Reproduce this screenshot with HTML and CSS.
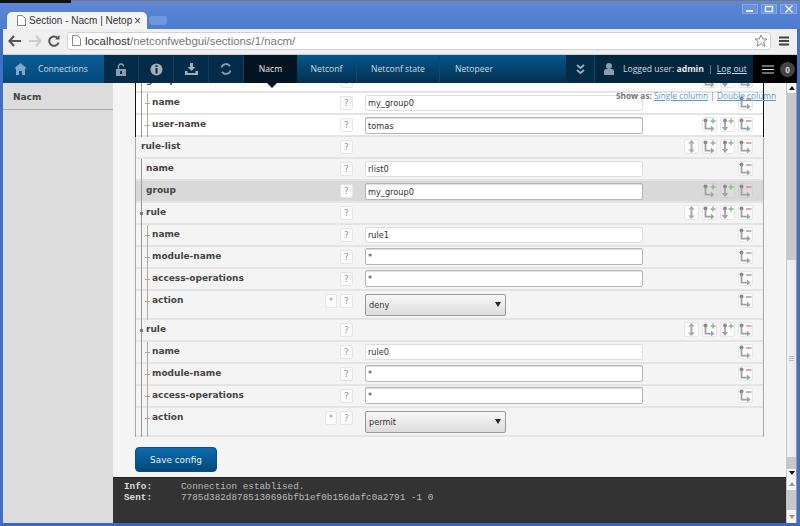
FILE: index.html
```html
<!DOCTYPE html>
<html lang="en">
<head>
<meta charset="utf-8">
<title>Section - Nacm | Netopeer</title>
<link rel="stylesheet" href="styles.css">
</head>
<body>
<svg class="defs" width="0" height="0" aria-hidden="true">
  <symbol id="i-move" viewBox="0 0 13 13"><path d="M6.500 2.500v8" stroke="#aaa" stroke-width="2" fill="none"/><path d="M6.500 0l3.200 3.500h-6.400zM6.500 13l3.200-3.500h-6.400z" fill="#aaa"/></symbol>
  <symbol id="i-child-add" viewBox="0 0 13 13"><circle cx="2.500" cy="2.500" r="2" fill="#888"/><path d="M2.500 3.500v7.200h6" stroke="#a2a2a2" stroke-width="1.800" fill="none"/><path d="M8 7.500l3.500 3.200L8 13.500z" fill="#a2a2a2"/><path d="M7.500 3h5M10 .5v5" stroke="#7fc47f" stroke-width="1.500"/></symbol>
  <symbol id="i-sib-add" viewBox="0 0 13 13"><circle cx="4" cy="2.500" r="2" fill="#888"/><path d="M4 3.500v6.500" stroke="#a2a2a2" stroke-width="1.800" fill="none"/><path d="M.8 9h6.400L4 13z" fill="#a2a2a2"/><path d="M7.500 3h5M10 .5v5" stroke="#7fc47f" stroke-width="1.500"/></symbol>
  <symbol id="i-remove" viewBox="0 0 13 13"><circle cx="2.500" cy="2.500" r="2" fill="#888"/><path d="M2.500 3.500v7.200h6" stroke="#a2a2a2" stroke-width="1.800" fill="none"/><path d="M8 7.500l3.500 3.200L8 13.500z" fill="#a2a2a2"/><path d="M7 3h5.500" stroke="#e08a8a" stroke-width="1.500"/></symbol>
</svg>

<div class="window">
  <div class="titlebar">
    <div class="tab">
      <svg class="tab-page" width="9" height="11" viewBox="0 0 9 11"><path d="M.5.500h5l3 3v7h-8z" fill="#fff" stroke="#888"/></svg>
      <span class="tab-title">Section - Nacm | Netop</span>
      <span class="tab-close">×</span>
    </div>
    <div class="tab-new"></div>
    <div class="win-controls">
      <span class="win-btn"><svg width="10" height="8" viewBox="0 0 10 8"><path d="M1 6h7" stroke="#e8eefa" stroke-width="2"/></svg></span>
      <span class="win-btn"><svg width="10" height="8" viewBox="0 0 10 8"><path d="M1.500 1.500h7v5h-7z" stroke="#e8eefa" stroke-width="1.400" fill="none"/></svg></span>
      <span class="win-btn wide"><svg width="10" height="8" viewBox="0 0 10 8"><path d="M1.500.500l7 7M8.500.500l-7 7" stroke="#e8eefa" stroke-width="1.500"/></svg></span>
    </div>
  </div>

  <div class="toolbar">
    <svg class="tool" width="14" height="12" viewBox="0 0 14 12"><path d="M6 1L1.500 6 6 11M2 6h11" stroke="#555" stroke-width="2.200" fill="none"/></svg>
    <svg class="tool" width="14" height="12" viewBox="0 0 14 12"><path d="M8 1l4.500 5L8 11M12 6H1" stroke="#ccc" stroke-width="2.200" fill="none"/></svg>
    <svg class="tool" width="12" height="12" viewBox="0 0 12 12"><path d="M10.500 7.500A4.700 4.700 0 1 1 9.300 2.800" stroke="#555" stroke-width="2" fill="none"/><path d="M7 4.500h4.500V0z" fill="#555"/></svg>
    <div class="omnibox">
      <svg width="9" height="11" viewBox="0 0 9 11"><path d="M.5.500h5l3 3v7h-8z" fill="#fff" stroke="#888"/></svg>
      <span class="url"><b>localhost</b>/netconfwebgui/sections/1/nacm/</span>
      <svg class="bookmark" width="14" height="14" viewBox="0 0 14 14"><path d="M7 1l1.800 4h4.200l-3.300 2.800 1.200 4.400L7 9.800l-3.900 2.400 1.200-4.400L1 5h4.200z" fill="#fff" stroke="#888"/></svg>
    </div>
    <svg class="menu" width="10" height="10" viewBox="0 0 10 10"><path d="M0 1.500h10M0 5h10M0 8.500h10" stroke="#444" stroke-width="2"/></svg>
  </div>

  <nav class="nav">
    <a class="nav-home">
      <svg width="13" height="12" viewBox="0 0 13 12"><path d="M6.500 0L0 5.500h2V12h3V8h3v4h3V5.500h2z" fill="#7fa8c9"/></svg>
      <span>Connections</span>
    </a>
    <div class="nav-tools">
      <span class="tool-cell"><svg width="10" height="13" viewBox="0 0 10 13"><path d="M0 6h10v7H0z" fill="#8a9eae"/><path d="M2.500 6V3.500a2.500 2.500 0 0 1 5 0" stroke="#8a9eae" stroke-width="1.400" fill="none"/><rect x="4" y="8" width="2" height="3" fill="#062a44"/></svg></span>
      <span class="tool-cell"><svg width="13" height="13" viewBox="0 0 13 13"><circle cx="6.500" cy="6.500" r="6" fill="#9fb0bd"/><path d="M5.500 5h2v5.500h-2zM5.500 2.200h2v1.800h-2z" fill="#062a44"/></svg></span>
      <span class="tool-cell"><svg width="13" height="12" viewBox="0 0 13 12"><path d="M5 0h3v4h2.500L6.500 8 2.500 4H5zM0 8h2.500v2h8V8H13v4H0z" fill="#9fb0bd"/></svg></span>
      <span class="tool-cell"><svg width="12" height="12" viewBox="0 0 12 12"><path d="M1.500 4.500A4.700 4.700 0 0 1 10 3.200M10.500 7.500A4.700 4.700 0 0 1 2 8.800" stroke="#8a9eae" stroke-width="1.800" fill="none"/></svg></span>
    </div>
    <a class="nav-tab active">Nacm</a>
    <a class="nav-tab t1">Netconf</a>
    <a class="nav-tab t2">Netconf state</a>
    <a class="nav-tab t3">Netopeer</a>
    <span class="nav-more"><svg width="9" height="11" viewBox="0 0 9 11"><path d="M1 1l3.500 3L8 1M1 6l3.500 3L8 6" stroke="#9fb0bd" stroke-width="1.800" fill="none"/></svg></span>
    <div class="nav-user">
      <svg width="10" height="12" viewBox="0 0 10 12"><circle cx="5" cy="3" r="3" fill="#8a9eae"/><path d="M0 12V8q0-2 2.500-2h5Q10 6 10 8v4z" fill="#8a9eae"/></svg>
      <span class="logged">Logged user: <b>admin</b></span>
      <span class="sep"></span>
      <a class="logout">Log out</a>
    </div>
    <div class="nav-log">
      <svg width="12" height="9" viewBox="0 0 12 9"><path d="M0 1h12M0 4.500h12M0 8h12" stroke="#ddd" stroke-width="1"/></svg>
      <span class="badge">0</span>
    </div>
    <span class="nav-arrow"></span>
  </nav>

  <div class="body">
    <aside class="side">
      <div class="side-item">Nacm</div>
    </aside>
    <div class="center">
      <div class="upper">
        <main class="main">
          <div class="show-as"><b>Show as:</b> <a>Single column</a> | <a>Double column</a></div>
          <div class="list">
            <div class="group-block">
              <div class="row d1"><span class="lab">group</span><span class="help">?</span><span class="field"></span>
                <span class="acts"><span class="ib"><svg><use href="#i-child-add"/></svg></span><span class="ib"><svg><use href="#i-sib-add"/></svg></span><span class="ib"><svg><use href="#i-remove"/></svg></span></span></div>
              <div class="row d2"><span class="lab">name</span><span class="help">?</span><input class="inp" value="my_group0">
                <span class="acts"><span class="ib"><svg><use href="#i-remove"/></svg></span></span></div>
              <div class="row d2"><span class="lab">user-name</span><span class="help">?</span><input class="inp strong" value="tomas">
                <span class="acts"><span class="ib"><svg><use href="#i-child-add"/></svg></span><span class="ib"><svg><use href="#i-sib-add"/></svg></span><span class="ib"><svg><use href="#i-remove"/></svg></span></span></div>
            </div>

            <div class="row d0"><span class="lab">rule-list</span><span class="help">?</span><span class="field"></span>
              <span class="acts"><span class="ib"><svg><use href="#i-move"/></svg></span><span class="ib"><svg><use href="#i-child-add"/></svg></span><span class="ib"><svg><use href="#i-sib-add"/></svg></span><span class="ib"><svg><use href="#i-remove"/></svg></span></span></div>
            <div class="row d1"><span class="lab">name</span><span class="help">?</span><input class="inp" value="rlist0">
              <span class="acts"><span class="ib"><svg><use href="#i-remove"/></svg></span></span></div>
            <div class="row d1 selected"><span class="lab">group</span><span class="help">?</span><input class="inp strong" value="my_group0">
              <span class="acts"><span class="ib"><svg><use href="#i-child-add"/></svg></span><span class="ib"><svg><use href="#i-sib-add"/></svg></span><span class="ib"><svg><use href="#i-remove"/></svg></span></span></div>

            <div class="row d1 node"><span class="lab">rule</span><span class="help">?</span><span class="field"></span>
              <span class="acts"><span class="ib"><svg><use href="#i-move"/></svg></span><span class="ib"><svg><use href="#i-child-add"/></svg></span><span class="ib"><svg><use href="#i-sib-add"/></svg></span><span class="ib"><svg><use href="#i-remove"/></svg></span></span></div>
            <div class="row d2"><span class="lab">name</span><span class="help">?</span><input class="inp" value="rule1">
              <span class="acts"><span class="ib"><svg><use href="#i-remove"/></svg></span></span></div>
            <div class="row d2"><span class="lab">module-name</span><span class="help">?</span><input class="inp strong tight" value="*">
              <span class="acts"><span class="ib"><svg><use href="#i-remove"/></svg></span></span></div>
            <div class="row d2"><span class="lab">access-operations</span><span class="help">?</span><input class="inp strong tight" value="*">
              <span class="acts"><span class="ib"><svg><use href="#i-remove"/></svg></span></span></div>
            <div class="row d2 tall"><span class="lab">action</span><span class="star">*</span><span class="help">?</span><span class="sel"><select><option>deny</option></select></span>
              <span class="acts"><span class="ib"><svg><use href="#i-remove"/></svg></span></span></div>

            <div class="row d1 node"><span class="lab">rule</span><span class="help">?</span><span class="field"></span>
              <span class="acts"><span class="ib"><svg><use href="#i-move"/></svg></span><span class="ib"><svg><use href="#i-child-add"/></svg></span><span class="ib"><svg><use href="#i-sib-add"/></svg></span><span class="ib"><svg><use href="#i-remove"/></svg></span></span></div>
            <div class="row d2"><span class="lab">name</span><span class="help">?</span><input class="inp" value="rule0">
              <span class="acts"><span class="ib"><svg><use href="#i-remove"/></svg></span></span></div>
            <div class="row d2"><span class="lab">module-name</span><span class="help">?</span><input class="inp strong tight" value="*">
              <span class="acts"><span class="ib"><svg><use href="#i-remove"/></svg></span></span></div>
            <div class="row d2"><span class="lab">access-operations</span><span class="help">?</span><input class="inp strong tight" value="*">
              <span class="acts"><span class="ib"><svg><use href="#i-remove"/></svg></span></span></div>
            <div class="row d2 tall"><span class="lab">action</span><span class="star">*</span><span class="help">?</span><span class="sel"><select><option>permit</option></select></span>
              <span class="acts"></span></div>
          </div>
          <button class="save">Save config</button>
        </main>
        <div class="scroll">
          <span class="sc-btn b1"><i class="up"></i></span>
          <span class="sc-track t1"></span>
          <span class="sc-thumb"></span>
          <span class="sc-track t2"></span>
          <span class="sc-btn b2"><i class="down"></i></span>
        </div>
      </div>
      <div class="lower">
        <div class="console">
          <div class="log-line"><b>Info:</b><span>Connection establised.</span></div>
          <div class="log-line"><b>Sent:</b><span>7785d382d8785130696bfb1ef0b156dafc0a2791 -1 0</span></div>
        </div>
        <div class="scroll small">
          <span class="sc-btn"><i class="up pale"></i></span>
          <span class="sc-track fill"></span>
          <span class="sc-btn"><i class="down pale"></i></span>
        </div>
      </div>
    </div>
  </div>
</div>
</body>
</html>
```
FILE: styles.css
```css
* { box-sizing: border-box; }
html, body { margin: 0; height: 100%; overflow: hidden; }
body { font-family: "DejaVu Sans", sans-serif; background: #4a78cc; }
.defs { position: absolute; }
.window { height: 526px; display: flex; flex-direction: column; border-left: 3px solid #3f6fc6; border-right: 3px solid #3f6fc6; border-bottom: 3px solid #3468c4; }

/* browser chrome */
.titlebar { height: 29px; margin-left: -3px; margin-right: -3px; padding: 12px 3px 0 7px; display: flex; align-items: flex-end; background: linear-gradient(#5f87d6, #4c7bd0); border-top: 1px solid #777; position: relative; }
.titlebar::before { content: ""; position: absolute; left: 0; top: -1px; width: 71px; height: 3px; background: #111; }
.tab { width: 140px; height: 17px; background: #f4f4f4; border-radius: 5px 5px 0 0; display: flex; align-items: center; padding: 0 0 0 10px; font: 10px "Liberation Sans", sans-serif; color: #333; }
.tab-title { margin-left: 3px; width: 100px; flex: none; white-space: nowrap; }
.tab-close { margin-left: 5px; font-size: 12px; color: #444; }
.tab-new { width: 18px; height: 9px; margin: 0 0 4px 2px; background: #6f97de; border-radius: 3px 3px 4px 4px; }
.win-controls { margin-left: auto; align-self: flex-start; margin-top: -9px; display: flex; gap: 3px; }
.win-btn { width: 16px; height: 10px; display: flex; align-items: center; justify-content: center; background: #6a92dc; border: 1px solid #86a7e4; }
.win-btn.wide { width: 17px; }

.toolbar { height: 26px; display: flex; align-items: center; padding: 0 8px 2px 5px; background: #efefef; border-bottom: 1px solid #ccc; }
.tool + .tool { margin-left: 6px; }
.omnibox { margin-left: 7px; height: 18px; width: 704px; flex: none; display: flex; align-items: center; padding: 0 1px 0 4px; background: #fff; border: 1px solid #d2d2d2; border-radius: 3px; }
.url { margin-left: 4px; font: 11.400px "Liberation Sans", sans-serif; color: #777; white-space: nowrap; }
.url b { font-weight: 400; color: #333; }
.bookmark { margin-left: auto; margin-right: 1px; }
.menu { margin-left: 8px; flex: none; }

/* application nav */
.nav { height: 28px; display: flex; color: #cfdae3; font: 8.600px "Open Sans", sans-serif; position: relative; z-index: 2; }
.nav-home { width: 101px; display: flex; align-items: center; gap: 11px; padding-left: 11px; background: linear-gradient(#0a5d97, #04497a); }
.nav-tools { display: flex; background: #042b47; }
.tool-cell { width: 35px; display: flex; align-items: center; justify-content: center; border-right: 1px solid #0b3d60; }
.nav-tab { display: flex; align-items: center; justify-content: center; background: linear-gradient(#06568c, #02304f); border-right: 1px solid #0a4a78; }
.nav-tab.active { width: 53px; background: #021421; color: #e6e6e6; border-right: 0; }
.nav-tab.t1 { width: 60px; }
.nav-tab.t2 { width: 83px; }
.nav-tab.t3 { width: 126px; justify-content: flex-start; padding-left: 15px; border-right: 0; }
.nav-more { width: 28px; display: flex; align-items: center; justify-content: center; background: #042b47; }
.nav-user { width: 159px; display: flex; align-items: center; padding-left: 9px; background: #03263f; border-left: 1px solid #0e4669; }
.nav-user svg { flex: none; }
.logged { margin-left: 9px; white-space: nowrap; }
.logged b { color: #e8e8e8; }
.sep { width: 1px; height: 9px; margin: 0 6px; background: #5b7a90; flex: none; }
.logout { text-decoration: underline; white-space: nowrap; }
.nav-log { flex: 1; display: flex; align-items: center; gap: 6px; padding-left: 9px; background: #000; }
.badge { width: 15px; height: 15px; border-radius: 50%; background: #444; color: #ddd; font-size: 8px; font-weight: 700; display: flex; align-items: center; justify-content: center; }
.nav-arrow { position: absolute; left: 264px; top: 28px; border: 5.500px solid transparent; border-top-color: #021421; border-bottom: 0; }

/* body */
.body { flex: 1; min-height: 0; display: flex; }
.side { width: 110px; background: #dcdcdc; }
.side-item { height: 27px; padding: 9px 0 0 10px; font-size: 9px; font-weight: 700; color: #444; border-bottom: 1px solid #aaa; }
.center { flex: 1; min-width: 0; display: flex; flex-direction: column; }
.upper { height: 394px; display: flex; }
.main { width: 673px; overflow: hidden; background: #f4f4f4; border-right: 1px solid #fff; position: relative; }
.show-as { position: absolute; right: 9px; top: 7px; z-index: 1; font: 8.300px "Open Sans", sans-serif; color: #777; white-space: nowrap; }
.show-as a { color: #5b9ac2; text-decoration: underline; }
.list { margin: -12px 21px 0 22px; border-left: 1px solid #aaa; border-right: 1px solid #aaa; border-bottom: 0; }
.group-block { background: #fff; margin: 0 -1px; border-left: 1px solid #111; border-right: 1px solid #111; }

.row { height: 22px; display: flex; align-items: flex-start; padding-top: 2px; border-bottom: 2px solid #e4e4e4; }
.row.tall { height: 29px; }
.row.selected { background: #d9d9d9; }
.lab { width: 204px; height: 22px; margin-top: -2px; padding-top: 4px; font-size: 9px; font-weight: 700; color: #444; flex: none; white-space: nowrap; background-repeat: no-repeat; }
.tall .lab { width: 189px; height: 29px; }
.d0 .lab { padding-left: 5px; }
.d1 .lab { padding-left: 10px; background-image: linear-gradient(#999, #999); background-size: 1px 100%; background-position: 5px 0; }
.d2 .lab { padding-left: 16px; background-image: linear-gradient(#999, #999), linear-gradient(#aaa, #aaa), linear-gradient(#aaa, #aaa); background-size: 1px 100%, 1px 100%, 5px 1px; background-position: 5px 0, 11px 0, 9px 10px; }
.node .lab { background-image: linear-gradient(#777, #777), linear-gradient(#999, #999); background-size: 3px 3px, 1px 100%; background-position: 4px 9px, 5px 0; }
.help, .star { flex: none; width: 13px; height: 14px; margin-top: 1px; display: flex; align-items: center; justify-content: center; background: #fbfbfb; border: 1px solid #e6e6e6; border-radius: 2px; color: #999; font-size: 9px; }
.star { width: 12px; margin-right: 3px; font-size: 8px; }
.field { width: 290px; flex: none; }
.inp { flex: none; margin: 0 0 0 12px; width: 278px; height: 16px; padding: 0 2px; font: 8.200px "DejaVu Sans", sans-serif; color: #333; background: #fff; border: 1px solid #ddd; border-radius: 2px; outline: 0; }
.inp.strong { height: 17px; border: 1px solid #b5b5b5; box-shadow: inset 0 1px 1px #ddd; }
.inp.tight { margin-top: -1px; }
.sel { flex: none; margin-left: 12px; width: 141px; height: 22px; position: relative; }
.sel::after { content: ""; position: absolute; right: 5px; top: 9px; border: 3.500px solid transparent; border-top: 5px solid #222; border-bottom: 0; }
.sel select { appearance: none; width: 100%; height: 100%; padding: 0 3px; font: 8.200px "DejaVu Sans", sans-serif; color: #333; background: linear-gradient(#f8f8f8, #dcdcdc); border: 1px solid #999; border-radius: 2px; }
.acts { margin-left: auto; padding-right: 10px; display: flex; gap: 3px; flex: none; }
.ib { width: 15px; height: 15px; background: #fbfbfb; border: 1px solid #e8e8e8; border-radius: 2px; display: block; }
.selected .ib { background: #dcdcdc; border-color: #d2d2d2; }
.ib svg { display: block; width: 13px; height: 13px; }
.save { display: block; margin: 10px 0 0 22px; width: 82px; height: 25px; padding: 0; font: 8.900px "DejaVu Sans", sans-serif; color: #e8f0f6; background: linear-gradient(#0b6cae, #03497c); border: 1px solid #0a4f80; border-radius: 4px; }

/* scrollbars */
.scroll { width: 11px; display: flex; flex-direction: column; background: #c8c8c8; border-left: 1px solid #c4c4c4; border-right: 1px solid #999; }
.sc-btn { height: 13px; flex: none; background: #f6f6f6; display: flex; align-items: center; justify-content: center; }
.sc-btn.b1 { height: 10px; }
.sc-btn.b2 { height: 8px; }
.sc-btn i { display: block; border-left: 3.500px solid transparent; border-right: 3.500px solid transparent; }
.sc-btn .up { border-bottom: 4px solid #111; }
.sc-btn .down { border-top: 4px solid #111; }
.sc-btn .up.pale { border-bottom-color: #999; }
.sc-btn .down.pale { border-top-color: #999; }
.sc-thumb { height: 197px; flex: none; background: linear-gradient(90deg, #f4f4f4, #e6e6e6); display: flex; align-items: center; justify-content: center; }
.sc-thumb::before { content: ""; width: 5px; height: 6px; background: repeating-linear-gradient(#bbb 0 1px, #eee 1px 2px); }
.sc-track { background: #c8c8c8; }
.sc-track.t1 { height: 167px; flex: none; }
.sc-track.t2 { flex: 1; }
.sc-track.fill { flex: 1; }
.lower { flex: 1; min-height: 0; display: flex; }
.console { width: 673px; padding: 3px 0 0 11px; background: #333; border-top: 1px solid #222; font: 9.350px/11px "Liberation Mono", monospace; color: #bbb; }
.log-line { display: flex; white-space: pre; }
.log-line b { width: 57px; color: #ddd; }
```
